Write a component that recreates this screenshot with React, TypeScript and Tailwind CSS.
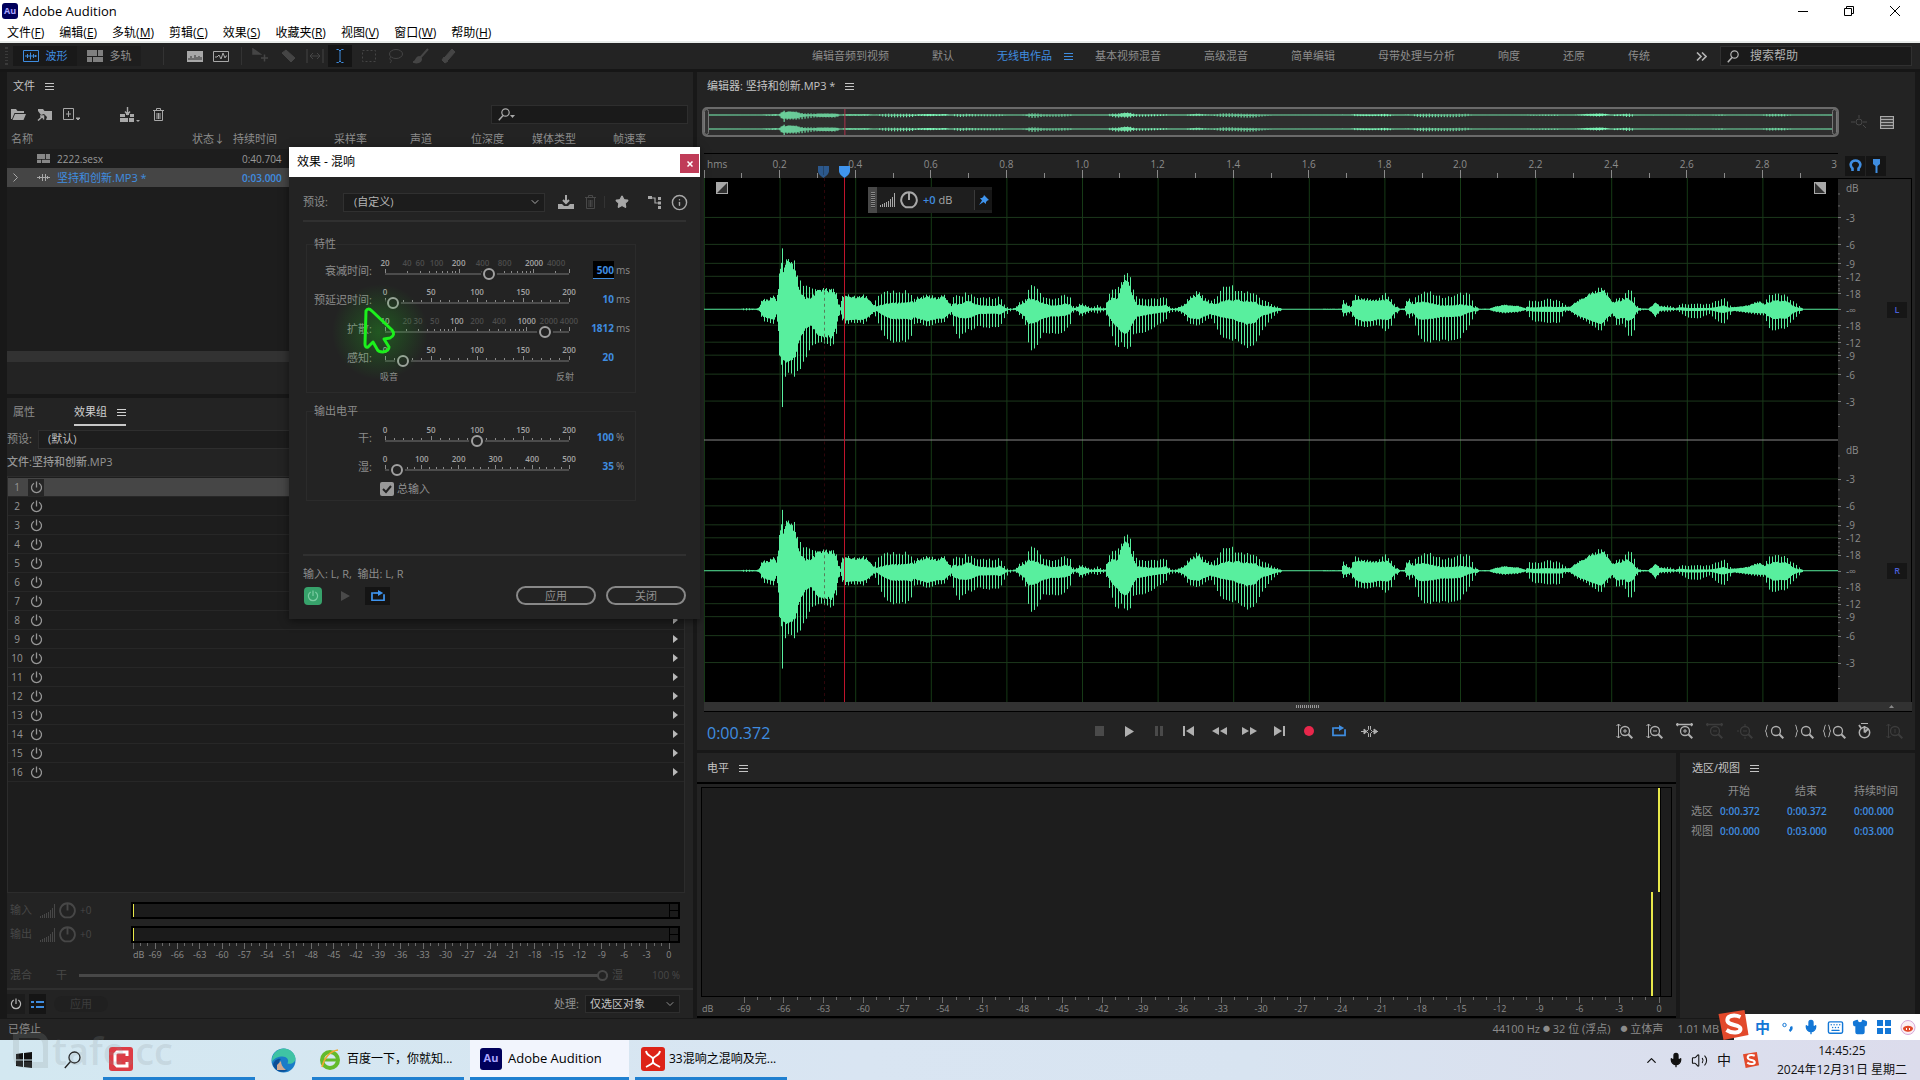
import React from "react";
import { Star, Search, ChevronDown, ChevronUp, Mic, Volume2, Info, Shirt, Keyboard } from "lucide-react";

type Pt = [number, number, number, number];

/* x, peak up, peak down, solid share of the envelope */
const FIRST: Pt[] = [
  [10, 1, 1, 1], [100, 1, 1, 1], [112, 4, 4, 0.2], [140, 2, 2, 1], [148, 5, 4, 1], [152, 20, 15, 0.6], [158, 38, 38, 0.6], [172, 36, 42, 0.7], [188, 46, 46, 0.7],
  [192, 25, 15, 0.8], [197, 60, 70, 0.9], [201, 145, 180, 0.8], [206, 150, 225, 0.8], [212, 150, 225, 0.7], [220, 154, 190, 0.85], [240, 152, 208, 0.75],
  [245, 108, 190, 0.6], [255, 82, 178, 0.45], [268, 72, 145, 0.4], [280, 66, 112, 0.45], [300, 64, 104, 0.8], [325, 68, 114, 0.75], [333, 68, 120, 0.75],
  [344, 58, 78, 0.7], [348, 20, 35, 0.7], [354, 10, 6, 0.6], [358, 40, 32, 0.8], [366, 48, 46, 0.8], [385, 42, 42, 0.8], [400, 40, 42, 0.8], [413, 48, 46, 0.7],
  [425, 34, 30, 0.8], [438, 12, 10, 0.8], [445, 42, 30, 0.2], [460, 50, 72, 0.25], [480, 60, 102, 0.3], [500, 54, 102, 0.3], [520, 60, 100, 0.3], [532, 56, 95, 0.35],
  [540, 36, 48, 0.5], [550, 40, 42, 0.7], [575, 48, 54, 0.7], [600, 38, 42, 0.7], [615, 50, 42, 0.7], [635, 15, 15, 0.6], [642, 54, 72, 0.3], [655, 40, 88, 0.3],
  [675, 54, 64, 0.45], [690, 44, 64, 0.35], [704, 38, 50, 0.3], [720, 38, 58, 0.25], [745, 36, 56, 0.25], [758, 46, 56, 0.3], [768, 18, 30, 0.3], [778, 5, 12, 0.2],
  [788, 2, 2, 0.5], [798, 8, 5, 0.5], [805, 20, 15, 0.6], [820, 30, 38, 0.6], [833, 80, 130, 0.35], [850, 66, 114, 0.35], [865, 45, 76, 0.4], [885, 34, 76, 0.3],
  [905, 36, 76, 0.3], [920, 50, 70, 0.3], [935, 42, 50, 0.3], [942, 12, 12, 0.3], [950, 8, 5, 0.5], [962, 20, 24, 0.6], [975, 12, 14, 0.6], [990, 5, 8, 0.4],
  [1005, 16, 14, 0.3], [1015, 6, 8, 0.4], [1024, 5, 5, 0.5], [1030, 44, 38, 0.5], [1040, 60, 75, 0.5], [1053, 64, 124, 0.45], [1065, 86, 100, 0.7],
  [1076, 136, 130, 0.6], [1088, 108, 118, 0.5], [1095, 70, 80, 0.5], [1105, 40, 78, 0.3], [1125, 36, 74, 0.25], [1145, 34, 58, 0.25], [1165, 36, 42, 0.25],
  [1178, 38, 32, 0.3], [1186, 10, 12, 0.3], [1195, 3, 8, 0.3], [1210, 8, 8, 0.6], [1225, 18, 22, 0.6], [1235, 42, 46, 0.6], [1258, 64, 52, 0.6], [1270, 44, 42, 0.6],
  [1290, 25, 25, 0.6], [1303, 34, 48, 0.4], [1310, 56, 76, 0.3], [1335, 82, 96, 0.3], [1350, 68, 94, 0.35], [1380, 54, 118, 0.4], [1400, 50, 110, 0.4],
  [1420, 32, 68, 0.3], [1440, 20, 34, 0.4], [1460, 8, 12, 0.4], [1472, 1, 1, 1],
];
const SECOND: Pt[] = [
  [104, 2, 2, 1], [110, 34, 26, 0.5], [118, 18, 18, 0.6], [128, 8, 10, 0.6], [134, 40, 32, 0.6], [140, 44, 50, 0.6], [160, 34, 54, 0.7], [180, 34, 54, 0.7],
  [200, 36, 50, 0.6], [215, 54, 68, 0.5], [228, 40, 60, 0.5], [240, 14, 22, 0.4], [252, 2, 2, 1], [264, 3, 3, 0.7], [272, 45, 32, 0.5], [285, 26, 22, 0.5],
  [300, 52, 90, 0.35], [315, 64, 106, 0.3], [335, 50, 98, 0.3], [360, 38, 96, 0.25], [385, 42, 98, 0.25], [405, 52, 88, 0.25], [430, 48, 46, 0.2], [440, 14, 20, 0.3],
  [452, 2, 2, 1], [478, 2, 2, 1], [490, 8, 8, 0.8], [515, 14, 13, 0.8], [550, 11, 10, 0.8], [570, 3, 3, 0.8], [578, 26, 22, 0.2], [590, 26, 38, 0.2], [625, 34, 42, 0.2],
  [655, 28, 42, 0.2], [668, 16, 10, 0.4], [680, 8, 5, 0.7], [700, 26, 24, 0.8], [730, 50, 44, 0.75], [760, 70, 68, 0.7], [775, 56, 40, 0.7], [790, 20, 15, 0.8],
  [800, 34, 50, 0.6], [820, 44, 46, 0.6], [832, 70, 92, 0.4], [845, 40, 66, 0.4], [852, 12, 15, 0.3], [862, 3, 3, 0.6], [880, 2, 2, 1], [890, 12, 12, 0.8],
  [897, 22, 26, 0.9], [910, 12, 8, 0.6], [935, 12, 8, 0.4], [950, 3, 3, 0.6], [960, 18, 10, 0.3], [980, 16, 26, 0.2], [1010, 18, 28, 0.2], [1035, 16, 14, 0.2],
  [1060, 32, 42, 0.25], [1072, 40, 46, 0.25], [1085, 14, 22, 0.3], [1095, 7, 6, 0.8], [1130, 12, 12, 0.8], [1160, 28, 18, 0.7], [1175, 18, 20, 0.6], [1183, 44, 54, 0.4],
  [1195, 50, 68, 0.45], [1210, 48, 60, 0.5], [1230, 46, 60, 0.5], [1245, 26, 34, 0.4], [1262, 12, 15, 0.3], [1272, 1, 1, 1], [1360, 1, 1, 1],
];
const ENV: Pt[] = [
  ...FIRST.map(([x, u, d, c]): Pt => [(x - 10) / 2.529, u / 3, d / 3, c]),
  ...SECOND.map(([x, u, d, c]): Pt => [(x + 1507) / 2.529, u / 3, d / 3, c]),
];

function wavePath(cy: number, gain: number) {
  let path = "";
  let k = 0;
  for (let x = 0; x < 1134; x++) {
    while (k < ENV.length - 2 && ENV[k + 1][0] < x) k++;
    const [x0, u0, d0, c0] = ENV[k];
    const [x1, u1, d1, c1] = ENV[k + 1];
    const t = Math.min(1, Math.max(0, (x - x0) / (x1 - x0)));
    let up = u0 + (u1 - u0) * t;
    let dn = d0 + (d1 - d0) * t;
    const core = c0 + (c1 - c0) * t;
    const noise = Math.abs(Math.sin(x * 12.9898) * 43758.5453) % 1;
    if (x % 3 !== 0) {
      up *= Math.min(1, core * 1.25);
      dn *= core;
    }
    up *= 0.8 + noise * 0.2;
    dn *= 0.92 + noise * 0.08;
    if (x === 78) {
      up = 61;
      dn = 98;
    }
    const a = Math.max(0.5, up * gain);
    const b = Math.max(0.5, dn * gain);
    path += `M${x + 0.5} ${(cy - a).toFixed(1)}V${(cy + b).toFixed(1)}`;
  }
  return path;
}
const WAVE_L = wavePath(131.5, 1);
const WAVE_R = wavePath(393.5, 1);
const MINI_L = wavePath(6, 0.07);
const MINI_R = wavePath(20, 0.07);

const DB: [number, string][] = [
  [-92, "-3"], [-65, "-6"], [-46, "-9"], [-33, "-12"], [-16, "-18"], [0, "-∞"], [16, "-18"], [33, "-12"], [46, "-9"], [65, "-6"], [92, "-3"],
];

const I = ({ children, w = 16, h = 16, vb, className = "" }: { children: React.ReactNode; w?: number; h?: number; vb?: string; className?: string }) => (
  <svg width={w} height={h} viewBox={vb ?? `0 0 ${w} ${h}`} fill="none" stroke="currentColor" className={`shrink-0 ${className}`} aria-hidden="true">
    {children}
  </svg>
);

const MenuLines = ({ className = "" }: { className?: string }) => (
  <I w={9} h={9} className={className}><path d="M0 1.5h9M0 4.5h9M0 7.5h9" /></I>
);
const WaveBox = () => (
  <I h={12}><path d="M.5.5h15v11H.5zM2 6h12M4.5 4v4M7.5 2.5v7M10.5 4v4M12.5 5v2" /></I>
);
const TrackBox = ({ w = 16 }: { w?: number }) => (
  <I w={w} h={w * 0.75} vb="0 0 16 12"><path d="M0 0h10v6H0zM11 0h5v6h-5zM0 7h5v5H0zM6 7h10v5H6z" fill="currentColor" stroke="none" opacity=".85" /></I>
);
const Loop = ({ w = 16 }: { w?: number }) => (
  <I w={w} h={w * 0.8} vb="0 0 16 13"><path d="M4.5 3.5H1v8.5h14V5" strokeWidth="2" /><path d="M4 3.5h6" strokeWidth="2" /><path d="M8 0l6 3.5L8 7z" fill="currentColor" stroke="none" /></I>
);
const Power = ({ w = 13 }: { w?: number }) => (
  <I w={w} h={w} vb="0 0 13 13"><path d="M4 2.2a5 5 0 1 0 5 0M6.500.5v6" strokeWidth="1.3" /></I>
);
const Knob = ({ w = 18 }: { w?: number }) => (
  <I w={w} h={w} vb="0 0 18 18"><path d="M6 16.300A7.800 7.800 0 1 1 12 16.300z" strokeWidth="2" /><path d="M9 2v7" strokeWidth="2" /></I>
);
const Bars = () => (
  <I w={16} h={14}><path d="M1.500 14v-2M3.500 14v-3M5.500 14v-4M7.500 14v-5M9.500 14v-6M11.500 14v-8M13.500 14v-10M15.500 14V0" /></I>
);
const Magnet = () => (
  <I w={13} h={13}><path d="M3.500 12V9.500C0 6 2 1.500 6.500 1.500S13 6 9.500 9.500V12" strokeWidth="2.600" /></I>
);
const Lens = () => (
  <I w={12} h={13}><circle cx="7.500" cy="4.500" r="3.700" strokeWidth="1.200" /><path d="M5 7.500L.8 12.300" strokeWidth="1.500" /></I>
);

const Mag = ({ inner = "" }: { inner?: string }) => (
  <>
    <circle cx="9" cy="8" r="4.500" strokeWidth="1.300" />
    <path d="M12.300 11.300l4 4" strokeWidth="2" />
    <path d={inner || "M9 8"} />
  </>
);

function Tool({ label, children, className = "" }: { label: string; children: React.ReactNode; className?: string }) {
  return (
    <button aria-label={label} className={`flex items-center justify-center ${className}`}>
      {children}
    </button>
  );
}

function AuLogo({ className = "" }: { className?: string }) {
  return <span className={`flex items-center justify-center rounded-[3px] bg-[#00005b] font-bold text-[#a9a4ff] ${className}`}>Au</span>;
}

const MENUS: [string, string][] = [["文件", "F"], ["编辑", "E"], ["多轨", "M"], ["剪辑", "C"], ["效果", "S"], ["收藏夹", "R"], ["视图", "V"], ["窗口", "W"], ["帮助", "H"]];

function TopBars() {
  return (
    <header>
      <div className="flex h-[22px] items-center bg-white pl-[2px] text-black">
        <AuLogo className="h-4 w-4 text-[9px]" />
        <h1 className="ml-[5px] text-[13px] leading-4">Adobe Audition</h1>
        <div className="ml-auto flex">
          <Tool label="最小化" className="w-[46px]"><I w={10} h={10}><path d="M0 5.500h10" /></I></Tool>
          <Tool label="还原" className="w-[46px]"><I w={10} h={10}><path d="M.5 2.500h7v7h-7zM2.500 2.500v-2h7v7h-2" /></I></Tool>
          <Tool label="关闭窗口" className="mr-[2px] w-[46px]"><I w={10} h={10}><path d="M0 0l10 10M10 0L0 10" /></I></Tool>
        </div>
      </div>
      <nav className="flex h-[21px] items-center gap-[15px] border-b-2 border-[#e8ecea] bg-white pt-[2px] pl-[7px] text-[12px] leading-4 text-black">
        {MENUS.map(([t, k]) => (
          <button key={k} className="whitespace-nowrap">{t}(<u>{k}</u>)</button>
        ))}
      </nav>
    </header>
  );
}

const SPACES = ["编辑音频到视频", "默认", "无线电作品", "基本视频混音", "高级混音", "简单编辑", "母带处理与分析", "响度", "还原", "传统"];

function ToolBar() {
  return (
    <div className="flex h-[29px] items-stretch border-b-[3px] border-[#161616] bg-[#232323] pr-2">
      <div className="my-1 ml-[5px] w-[3px] border-y border-[#3a3a3a] bg-[repeating-linear-gradient(#3a3a3a_0_1px,transparent_1px_3px)]" />
      <button className="my-[3px] ml-[5px] flex w-16 items-center justify-center gap-[7px] bg-[#191919] text-[11px] text-[#3f8de0]"><WaveBox />波形</button>
      <button className="my-[3px] flex w-16 items-center justify-center gap-[7px] bg-[#1e1e1e] text-[11px] text-[#909090]"><TrackBox />多轨</button>
      <div className="my-1 ml-[22px] w-px bg-[#333]" />
      <div className="ml-[18px] flex text-[#a8a8a8]">
        <Tool label="频谱" className="w-[26px]"><I h={11}><path d="M0 0h16v11H0z" fill="currentColor" stroke="none" /><path d="M2 9V7M4 9V5M6 9V7M8 9V4M10 9V6M12 9V5M14 9V6" stroke="#333" /></I></Tool>
        <Tool label="音高" className="w-[26px]"><I h={11}><path d="M.5.500h15v10H.5zM2 6h2l2-2 2 4 2-6 2 5 1-2h1" /></I></Tool>
      </div>
      <div className="my-1 ml-[7px] w-px bg-[#333]" />
      <div className="flex text-[#454545]">
        <Tool label="移动" className="ml-1 w-[28px]"><I><path d="M1 1l7 5H1zM9 10h7M12.500 6.500v7" fill="currentColor" strokeWidth="1.500" /></I></Tool>
        <Tool label="切断" className="w-[28px]"><I w={15} h={14}><path d="M1 4l4-3 9 8-4 4z" fill="currentColor" /></I></Tool>
        <Tool label="滑动" className="w-[26px]"><I w={18}><path d="M1 1v14M17 1v14M4 8h10M7 5L4 8l3 3M11 5l3 3-3 3" /></I></Tool>
        <Tool label="时间选择" className="my-[2px] w-[24px] bg-[#141414] text-[#3f8de0]"><I w={8} h={14}><path d="M.5.500h2L4 2 5.500.500h2M4 2v10M.5 13.500h2L4 12l1.500 1.500h2" /></I></Tool>
        <Tool label="框选" className="ml-1 w-[26px]"><I w={14} h={12}><path d="M.5.500h13v11H.5z" strokeDasharray="2 2" /></I></Tool>
        <Tool label="套索" className="w-[26px]"><I><ellipse cx="9" cy="6" rx="6.500" ry="4.500" /><path d="M4 9c-2 1-1 3 0 3s0 2-1 3" /></I></Tool>
        <Tool label="画笔" className="w-[26px]"><I><path d="M15 1L7 10M6 9c-3 0-2 4-5 5 3 1 7 0 7-3z" fill="currentColor" strokeWidth="2" /></I></Tool>
        <Tool label="修复" className="w-[27px]"><I><path d="M5 9l7-8 3 3-7 8zM2 12l2-3 4 4-3 2z" fill="currentColor" /></I></Tool>
      </div>
      <nav className="ml-auto flex items-center gap-[43px] text-[11px] text-[#8c8c8c]">
        {SPACES.map((s, i) => (
          <button key={s} className={i === 2 ? "-mr-[21px] flex items-center gap-3 whitespace-nowrap text-[#3f8de0]" : "whitespace-nowrap"}>
            {s}{i === 2 && <MenuLines />}
          </button>
        ))}
      </nav>
      <button aria-label="更多" className="ml-[46px] text-[#b4b4b4]"><I w={11} h={9}><path d="M1 .5l4 4-4 4M6 .5l4 4-4 4" strokeWidth="1.600" /></I></button>
      <label className="my-[3px] ml-[13px] flex w-[192px] items-center gap-[11px] border border-[#303030] bg-[#1a1a1a] pl-[6px] text-[#b4b4b4]">
        <Lens />
        <input type="text" aria-label="搜索帮助" placeholder="搜索帮助" className="w-full bg-transparent text-[12px] outline-none placeholder:text-[#b0b0b0]" />
      </label>
    </div>
  );
}

function PanelHead({ title, className = "" }: { title: string; className?: string }) {
  return (
    <h2 className={`flex h-7 shrink-0 items-center gap-[10px] text-[11px] text-[#c4c4c4] ${className}`}>
      {title}
      <MenuLines />
    </h2>
  );
}

function FilesPanel() {
  return (
    <section className="flex h-[322px] shrink-0 flex-col bg-[#232323]">
      <PanelHead title="文件" className="pl-[6px]" />
      <div className="flex h-7 items-center pl-1 text-[#a8a8a8]">
        <Tool label="打开"><I w={15} h={12}><path d="M0 1h5l1.500 2H13v2H3.500L1 11H0zM4 6h11l-2.500 6H1.500z" fill="currentColor" stroke="none" /></I></Tool>
        <Tool label="导入" className="ml-[11px]"><I w={16} h={13}><path d="M1 3V1h5l1.500 2H15v9H9l1-3-3-3-3 1z" fill="currentColor" stroke="none" /><path d="M1 12.500L6 8M3 8h3.500v3.500" strokeWidth="1.500" /></I></Tool>
        <Tool label="新建" className="ml-[10px]"><I w={18} h={12}><path d="M.5.500h10v11H.5zM5.500 3v6M3 6h5" /><path d="M13 10h4l-2 2z" fill="currentColor" /></I></Tool>
        <Tool label="插入多轨" className="ml-[39px]"><I w={20} h={15}><path d="M0 7h5v3H0zM10 7h4v3h-4zM0 11h8v4H0zM9 11h5v4H9zM6 5h3v3H6z" fill="currentColor" stroke="none" /><path d="M7.500 0v7M5 4.500L7.500 7.500 10 4.500" strokeWidth="1.400" /><path d="M16 13h4l-2 2z" fill="currentColor" stroke="none" /></I></Tool>
        <Tool label="删除" className="ml-[13px]"><I w={11} h={13}><path d="M0 2.500h11M3.500 2V.500h4V2M1.500 3v9.500h8V3M4 5v6M5.500 5v6M7 5v6" /></I></Tool>
        <label className="mr-[5px] ml-auto flex h-[19px] w-[197px] items-center border border-[#2e2e2e] bg-[#1a1a1a] pl-[6px]">
          <Lens />
          <I w={5} h={3} className="mt-1"><path d="M0 0h5L2.500 3z" fill="currentColor" stroke="none" /></I>
          <input type="text" aria-label="搜索文件" className="w-full bg-transparent text-[11px] outline-none" />
        </label>
      </div>
      <div className="flex-1 bg-[#1d1d1d]">
        <table className="w-full table-fixed text-left text-[11px] leading-4 text-[#8c8c8c]">
          <colgroup>
            <col className="w-[185px]" /><col className="w-[41px]" /><col className="w-[101px]" /><col className="w-[76px]" /><col className="w-[61px]" /><col className="w-[61px]" /><col className="w-[81px]" /><col />
          </colgroup>
          <thead className="bg-[#232323]">
            <tr className="h-[21px]">
              {["名称", "状态↓", "持续时间", "采样率", "声道", "位深度", "媒体类型", "帧速率"].map((h, i) => (
                <th key={h} className={i === 0 ? "pl-1 font-normal" : "whitespace-nowrap font-normal"}>{h}</th>
              ))}
            </tr>
          </thead>
          <tbody>
            <tr className="h-[19px] text-[10px] text-[#9a9a9a]">
              <td><span className="flex items-center gap-[7px] pl-[30px]"><TrackBox w={13} />2222.sesx</span></td>
              <td /><td className="pl-[9px]">0:40.704</td><td colSpan={5} />
            </tr>
            <tr className="h-[19px] bg-[#454545] text-[10px] text-[#3f8de0]">
              <td>
                <span className="flex items-center pl-[6px]">
                  <I w={5} h={9} className="text-[#a8a8a8]"><path d="M.5.500l4 4-4 4" /></I>
                  <I w={13} h={9} className="mr-[7px] ml-[19px] text-[#a8a8a8]"><path d="M0 4.500h13M2.500 3v3M5.500 1v7M8.500 1v7M10.500 3v3" /></I>
                  <span className="whitespace-nowrap text-[11px]">坚持和创新.MP3 *</span>
                </span>
              </td>
              <td /><td className="pl-[9px] font-semibold">0:03.000</td><td colSpan={5} />
            </tr>
          </tbody>
        </table>
      </div>
      <div className="h-[11px] bg-[#323232]" />
      <div className="h-8" />
    </section>
  );
}

function DbLabels({ className = "" }: { className?: string }) {
  const vals = Array.from({ length: 24 }, (_, i) => String(-69 + i * 3));
  return (
    <div className={`flex justify-between text-[9px] leading-[12px] text-[#8c8c8c] ${className}`}>
      {vals.map((v) => (
        <span key={v} className="flex w-0 justify-center">{v}</span>
      ))}
    </div>
  );
}

function MeterTicks({ steps = 72 }: { steps?: number }) {
  return (
    <svg className="block h-[6px] w-full overflow-visible" aria-hidden="true">
      {Array.from({ length: steps + 1 }, (_, i) => (
        <line key={i} x1={`${(i / steps) * 100}%`} x2={`${(i / steps) * 100}%`} y1="0" y2={i % 3 === 0 ? 6 : 3} stroke="#6a6a6a" shapeRendering="crispEdges" />
      ))}
    </svg>
  );
}

function RackMeter({ label }: { label: string }) {
  return (
    <div className="flex h-[17px] items-center pr-[13px] pl-[3px]">
      <div className="flex w-[121px] items-center gap-[7px] text-[11px] text-[#474747]">
        {label}<span className="flex items-center gap-[4px]"><Bars /><Knob w={17} /><span className="text-[10px]">+0</span></span>
      </div>
      <div className="flex h-full flex-1 border-2 border-black bg-[#1b1b1b]">
        <div className="w-px bg-[#e8e84a]" />
        <div className="ml-auto flex w-[9px] flex-col border-l border-black"><div className="h-1/2 border-b border-black" /></div>
      </div>
    </div>
  );
}

function RackPanel() {
  return (
    <section className="flex min-h-0 flex-1 flex-col bg-[#232323]">
      <div className="flex h-[29px] shrink-0 items-center pl-[6px] text-[11px]">
        <button className="w-[61px] text-left text-[#8c8c8c]">属性</button>
        <button className="mt-[2px] flex h-[25px] items-center gap-[10px] border-b-2 border-[#c8c8c8] text-[#d0d0d0]">效果组<MenuLines /></button>
      </div>
      <label className="flex h-6 items-center text-[11px] text-[#8c8c8c]">
        <span className="w-[31px]">预设:</span>
        <select className="h-[19px] flex-1 appearance-none border border-[#2e2e2e] bg-[#1d1d1d] pl-[9px] text-[#c0c0c0]"><option>(默认)</option></select>
      </label>
      <p className="flex h-[25px] items-center pb-[2px] text-[11px] font-medium text-[#959595]">文件:坚持和创新.MP3</p>
      <ol className="mr-2 min-h-0 flex-1 border border-[#2c2c2c] bg-[#1d1d1d] pt-px text-[10px] text-[#969696]">
        {Array.from({ length: 16 }, (_, i) => (
          <li key={i} className={`flex h-[19px] items-center border-b border-[#272727] ${i === 0 ? "bg-[#464646]" : "bg-[#1d1d1d]"}`}>
            <span className="w-[18px] text-center">{i + 1}</span>
            <Tool label={`效果 ${i + 1} 电源`} className={`ml-[2px] h-[17px] w-4 ${i === 0 ? "bg-[#262626]" : ""}`}><Power /></Tool>
            <Tool label={`效果 ${i + 1} 菜单`} className="mr-px ml-auto h-4 w-4 text-[#b8b8b8]"><I w={5} h={8}><path d="M0 0l5 4-5 4z" fill="currentColor" stroke="none" /></I></Tool>
          </li>
        ))}
      </ol>
      <div className="mt-[9px] flex flex-col gap-[7px]">
        <RackMeter label="输入" />
        <RackMeter label="输出" />
      </div>
      <div className="mr-[24px] ml-[126px] flex text-[9px] leading-[12px] text-[#8c8c8c]">
        <div className="flex w-[22px] flex-col"><svg className="block h-[6px] w-full" aria-hidden="true"><path d="M.5 0v6M7.500 0v3M14.500 0v3" stroke="#6a6a6a" /></svg><span>dB</span></div>
        <div className="flex-1"><MeterTicks steps={69} /><DbLabels /></div>
      </div>
      <div className="mt-1 flex h-5 items-center pl-[3px] text-[11px] text-[#484848]">
        <span className="w-[46px]">混合</span><span className="w-[23px]">干</span>
        <input type="range" aria-label="混合" defaultValue={100} className="h-3 w-[529px] appearance-none bg-[linear-gradient(#484848,#484848)] bg-[length:100%_3px] bg-center bg-no-repeat [&::-webkit-slider-thumb]:h-[11px] [&::-webkit-slider-thumb]:w-[11px] [&::-webkit-slider-thumb]:appearance-none [&::-webkit-slider-thumb]:rounded-full [&::-webkit-slider-thumb]:border-2 [&::-webkit-slider-thumb]:border-[#484848] [&::-webkit-slider-thumb]:bg-[#232323]" />
        <span className="ml-1">湿</span><span className="ml-auto pr-[13px] text-[10px]">100 %</span>
      </div>
      <div className="mt-[3px] h-[2px] bg-[#2f2f2f]" />
      <div className="flex h-[28px] items-center text-[11px] text-[#909090]">
        <Tool label="电源" className="h-5 w-[18px] bg-[#1c1c1c] text-[#b8b8b8]"><Power w={12} /></Tool>
        <Tool label="列表" className="ml-[4px] h-5 w-[17px] bg-[#151515] text-[#3f8de0]"><I w={13} h={9}><path d="M0 2h3M5 2h8M0 7h3M5 7h8" strokeWidth="2" /></I></Tool>
        <button className="ml-[8px] h-4 w-[54px] rounded-lg bg-[#202020] text-[#3c3c3c]">应用</button>
        <label className="mr-[13px] ml-auto flex items-center gap-[6px]">处理:
          <span className="flex h-[18px] items-center border border-[#2e2e2e] bg-[#1a1a1a]">
            <select className="w-[78px] appearance-none bg-transparent pl-[4px] text-[#c4c4c4]"><option>仅选区对象</option></select>
            <ChevronDown size={12} className="mr-[3px]" />
          </span>
        </label>
      </div>
    </section>
  );
}

function WaveView() {
  const secs = Array.from({ length: 31 }, (_, i) => i);
  const pin = "flex w-0 justify-center";
  return (
    <div className="flex min-h-0 flex-1 pr-[3px] pl-[7px]">
      <div className="flex min-w-0 flex-1 flex-col">
        <div className="relative h-[25px] overflow-hidden border-t border-black bg-[#232323] text-[10px] leading-[14px] text-[#8c8c8c]">
          <svg className="absolute inset-0 h-full w-full" aria-hidden="true">
            {secs.map((i) => (
              <line key={i} x1={`${i / 0.3}%`} x2={`${i / 0.3}%`} y1={i % 2 ? 19 : 16} y2="25" stroke="#8a8a8a" shapeRendering="crispEdges" />
            ))}
          </svg>
          <div className="flex justify-between pt-[3px]">
            <span className="w-0"><span className="pl-[3px]">hms</span></span>
            {secs.slice(1, 15).map((i) => (
              <span key={i} className={pin}>{(i * 0.2).toFixed(1)}</span>
            ))}
            <span className="flex w-0 justify-end"><span className="pr-px">3</span></span>
          </div>
          <svg className="absolute top-[12px] left-[12.400%] -ml-[6px] h-3 w-[11px]" viewBox="0 0 11 12" aria-hidden="true"><path d="M0 0h11v5c0 3-3 5-5.500 7C3 10 0 8 0 5z" fill="#3f94ee" /></svg>
          <svg className="absolute top-[12px] left-[10.600%] -ml-[6px] h-3 w-[11px]" viewBox="0 0 11 12" aria-hidden="true"><path d="M0 0h11v5c0 3-3 5-5.500 7C3 10 0 8 0 5z" fill="#2c588c" /><path d="M5.500 0v9" stroke="#234468" /></svg>
        </div>
        <div className="relative min-h-0 flex-1 bg-black">
          <svg className="absolute inset-0 h-full w-full" viewBox="0 0 1134 525" preserveAspectRatio="none" role="img" aria-label="波形">
            <g stroke="#163a16" shapeRendering="crispEdges">
              {secs.filter((i) => i % 2 === 0 && i < 30).map((i) => (
                <line key={i} x1={i * 37.8 + 0.5} x2={i * 37.8 + 0.5} y1="0" y2="525" />
              ))}
            </g>
            <g stroke="#1c381c" shapeRendering="crispEdges">
              {[131.5, 393.5].map((c) => DB.filter(([d]) => d !== 0).map(([d]) => <line key={`${c}${d}`} x1="0" x2="1134" y1={c + d} y2={c + d} />))}
            </g>
            <path d="M0 262.500h1134" stroke="#8a8a8a" />
            <path d={WAVE_L} stroke="#58f09f" />
            <path d={WAVE_R} stroke="#58f09f" />
            <path d="M120.500 0v525" stroke="#5a0a14" strokeDasharray="3 3" opacity=".5" />
            <path d="M140.500 0v525" stroke="#c0142c" shapeRendering="crispEdges" />
          </svg>
          <svg className="absolute top-1 left-3 h-3 w-3" viewBox="0 0 12 12" aria-hidden="true"><path d="M0 0h12v12H0z" fill="#a8a8a8" /><path d="M11 1v10H1z" fill="#303030" /></svg>
          <svg className="absolute top-1 right-3 h-3 w-3" viewBox="0 0 12 12" aria-hidden="true"><path d="M0 0h12v12H0z" fill="#a8a8a8" /><path d="M1 1v10h10z" fill="#303030" /></svg>
          <div className="absolute top-[9px] left-[164px] flex h-[26px] w-[124px] items-center bg-[#1e1e1e] text-[#a8a8a8]">
            <div className="mr-[2px] flex h-full w-[9px] items-center justify-center bg-[#484848]"><div className="h-4 w-1 bg-[repeating-linear-gradient(#888_0_1px,#333_1px_2px)]" /></div>
            <Bars />
            <span className="mx-[5px]"><Knob /></span>
            <span className="text-[11px]"><span className="font-semibold text-[#3f8de0]">+0</span> dB</span>
            <Tool label="固定" className="ml-auto h-5 w-[18px] border-l border-[#3a3a3a] bg-[#161616] text-[#3f94ee]"><I w={10} h={10}><path d="M5 0l5 5-1.500.5L7 7v2L4.500 7 0 10l3-4.500L1 3h2l1.500-1.500z" fill="currentColor" stroke="none" /></I></Tool>
          </div>
        </div>
      </div>
      <div className="flex w-[74px] flex-col text-[10px] leading-3 text-[#8c8c8c]">
        <div className="flex h-[25px] items-center gap-px pl-[7px] text-[#3f8de0]">
          <Tool label="对齐" className="h-5 w-[20px] bg-[#151515]"><Magnet /></Tool>
          <Tool label="标记" className="h-5 w-[20px] bg-[#151515]"><I w={9} h={14}><path d="M1 0h7v5L5.500 7v7h-2V7L1 5z" fill="currentColor" stroke="none" /></I></Tool>
        </div>
        <div className="flex min-h-0 flex-1 flex-col border-t border-r border-black">
          {["L", "R"].map((ch) => (
            <div key={ch} className="relative flex-1">
              <span className="absolute top-[3px] left-2">dB</span>
              {DB.map(([d, t]) => (
                <span key={d} className="absolute left-0 flex -translate-y-1/2 items-center gap-[5px]" style={{ top: `${50 + (d / 262) * 100}%` }}>
                  <span className="h-px w-[3px] bg-[#777]" />{t}
                </span>
              ))}
              <svg className="absolute top-0 left-0 h-full w-[2px]" aria-hidden="true" viewBox="0 0 2 262" preserveAspectRatio="none">
                {[15, 27, 49, 58, 75, 80, 91, 102, 106, 110, 112, 149, 153, 157, 160, 170, 174, 182, 190, 206, 215, 236, 248].map((y) => <path key={y} d={`M0 ${y}h2`} stroke="#666" />)}
              </svg>
              <button className="absolute top-1/2 right-1 flex h-4 w-5 -translate-y-1/2 items-center justify-center bg-[#161616] text-[9px] font-semibold text-[#4a5fd8]">{ch}</button>
            </div>
          ))}
        </div>
      </div>
    </div>
  );
}

const V = <path d="M2.500 1v14M.5 3l2-2 2 2M.5 13l2 2 2-2" />;
const H = <path d="M0 1.500h17M2 0L.5 1.500 2 3M15 0l1.500 1.500L15 3" strokeWidth="1.300" />;
const DIM = "text-[#3c3c3c]";

function Transport() {
  const off = "text-[#4a4a4a]";
  const b = "w-[30px]";
  const z = "w-[30px]";
  return (
    <div className="flex h-[38px] shrink-0 items-center pr-[6px] pl-[10px] text-[#b0b0b0]">
      <output className="w-[377px] pt-[3px] text-[16px] leading-5 text-[#3f8de0]">0:00.372</output>
      <div className="flex h-5 items-center">
        <Tool label="停止" className={`${b} ${off}`}><I w={9} h={10}><path d="M0 0h9v10H0z" fill="currentColor" stroke="none" /></I></Tool>
        <Tool label="播放" className={b}><I w={9} h={11}><path d="M0 0l9 5.500L0 11z" fill="currentColor" stroke="none" /></I></Tool>
        <Tool label="暂停" className={`${b} ${off}`}><I w={8} h={10}><path d="M0 0h3v10H0zM5 0h3v10H5z" fill="currentColor" stroke="none" /></I></Tool>
        <Tool label="上一个" className={b}><I w={12} h={10}><path d="M1 0v10" strokeWidth="2" /><path d="M11 0L3 5l8 5z" fill="currentColor" stroke="none" /></I></Tool>
        <Tool label="快退" className={b}><I w={15} h={8}><path d="M7 0L0 4l7 4zM15 0L8 4l7 4z" fill="currentColor" stroke="none" /></I></Tool>
        <Tool label="快进" className={b}><I w={15} h={8}><path d="M0 0l7 4-7 4zM8 0l7 4-7 4z" fill="currentColor" stroke="none" /></I></Tool>
        <Tool label="下一个" className={b}><I w={12} h={10}><path d="M11 0v10" strokeWidth="2" /><path d="M1 0l8 5-8 5z" fill="currentColor" stroke="none" /></I></Tool>
        <Tool label="录制" className={b}><span className="h-[10px] w-[10px] rounded-full bg-[#e8274b]" /></Tool>
        <Tool label="循环" className={`${b} text-[#3f8de0]`}><Loop w={14} /></Tool>
        <Tool label="跳过选区" className={b}><I w={17} h={11}><path d="M0 5.500h5M12 5.500h5M7.500 0v3.500l-2 2 2 2V11M9.500 0v3.500l2 2-2 2V11" /><path d="M3 3l3 2.500L3 8zM13 3l3.500 2.500L13 8z" fill="currentColor" /></I></Tool>
      </div>
      <div className="ml-auto flex h-5 items-center">
        <Tool label="垂直放大" className={z}><I w={17}>{V}<Mag inner="M9 6v4M7 8h4" /></I></Tool>
        <Tool label="垂直缩小" className={z}><I w={17}>{V}<Mag inner="M7 8h4" /></I></Tool>
        <Tool label="水平放大" className={z}><I w={17} h={17}>{H}<Mag inner="M9 6v4M7 8h4" /></I></Tool>
        <Tool label="水平缩小" className={`${z} ${DIM}`}><I w={17} h={17}>{H}<Mag inner="M7 8h4" /></I></Tool>
        <Tool label="全部缩小" className={`${z} ${DIM}`}><I w={17} h={17}><Mag inner="M9 1v2M1 8h2M7 8h4M9 14v2" /></I></Tool>
        <Tool label="缩放入点" className={z}><I w={20} vb="-3 0 20 16"><Mag /><path d="M1 2C-1 2 0 8-2 8c2 0 1 6 3 6" /></I></Tool>
        <Tool label="缩放出点" className={z}><I w={20} vb="-3 0 20 16"><Mag /><path d="M-2 2C0 2-1 8 1 8c-2 0-1 6-3 6" /></I></Tool>
        <Tool label="缩放选区" className={z}><I w={24} vb="-7 0 24 16"><Mag /><path d="M-3 2c-2 0-1 6-3 6 2 0 1 6 3 6M-1 2c2 0 1 6 3 6-2 0-1 6-3 6" /></I></Tool>
        <Tool label="时间缩放" className={z}><I w={15}><circle cx="7.500" cy="9.500" r="5.200" strokeWidth="1.500" /><path d="M7.500 9.500V3M4 0h7M2 2l2 3M7.500 9.500L11 6" strokeWidth="1.800" /></I></Tool>
        <Tool label="缩放重置" className={`${z} ${DIM}`}><I w={17}>{V}<Mag inner="M9 6v4" /></I></Tool>
      </div>
    </div>
  );
}

function EditorPanel() {
  return (
    <section className="flex min-h-0 flex-1 flex-col bg-[#232323]">
      <PanelHead title="编辑器: 坚持和创新.MP3 *" className="pl-[10px]" />
      <div className="flex h-[53px] shrink-0 items-start pt-[7px] pl-[5px]">
        <div className="relative h-[30px] min-w-0 flex-1 rounded-[5px] border-2 border-[#6a6a6a] bg-[#2e2e2e] px-[2px]">
          <svg className="block h-[26px] w-full" viewBox="0 0 1134 26" preserveAspectRatio="none" aria-hidden="true">
            <path d={MINI_L} stroke="#7dfcbb" />
            <path d={MINI_R} stroke="#7dfcbb" />
            <path d="M139.500 0v26" stroke="#b0304a" />
          </svg>
          <div className="absolute inset-y-0 left-0 w-[5px] rounded-sm border border-[#777] bg-[#333]" />
          <div className="absolute inset-y-0 right-0 w-[5px] rounded-sm border border-[#777] bg-[#333]" />
        </div>
        <div className="flex h-[30px] w-[76px] items-center gap-[13px] pl-[12px]">
          <Tool label="缩放导航" className="text-[#484848]"><I w={16} h={14}><circle cx="8" cy="7" r="3" /><path d="M0 7h4M12 10l3 3M8 0v3M12 7h4" /></I></Tool>
          <Tool label="显示列表" className="text-[#a8a8a8]"><I w={14} h={13}><path d="M.5.500h13v12H.5zM1 3.500h12M1 6.500h12M1 9.500h12" strokeWidth="1.300" /></I></Tool>
        </div>
      </div>
      <WaveView />
      <div className="mr-[3px] ml-[7px] flex h-[10px] shrink-0 items-center border-b border-black bg-[#323232] pr-[18px] pl-[23px] text-[#888]">
        <div className="mx-auto h-[3px] w-6 bg-[repeating-linear-gradient(90deg,#999_0_1px,transparent_1px_2px)]" />
        <I w={5} h={3}><path d="M0 3h5L2.500 0z" fill="currentColor" stroke="none" /></I>
      </div>
      <Transport />
    </section>
  );
}

function LevelPanel() {
  return (
    <section className="flex min-w-0 flex-1 flex-col bg-[#232323]">
      <PanelHead title="电平" className="h-[31px] border-b-2 border-black pt-[2px] pl-[10px]" />
      <div className="mx-1 mt-[3px] flex min-h-0 flex-1 border border-black bg-[#1d1d1d] pr-[10px]">
        <div className="ml-auto grid w-[10px] grid-rows-2 border-r border-black">
          <div className="border-r-2 border-[#e8e84a]" />
          <div className="border-l-2 border-[#e8e84a]" />
        </div>
      </div>
      <div className="mr-[17px] ml-[5px] flex text-[9px] leading-[12px] text-[#8c8c8c]">
        <div className="w-[42px] pt-[6px]">dB</div>
        <div className="flex-1"><MeterTicks steps={69} /><DbLabels /></div>
      </div>
      <div className="mt-px border-b-2 border-black" />
    </section>
  );
}

function SelectionPanel() {
  return (
    <section className="w-[235px] bg-[#232323]">
      <PanelHead title="选区/视图" className="pt-[2px] pl-3" />
      <table className="ml-[11px] w-[213px] table-fixed text-left text-[11px] leading-4 text-[#8c8c8c]">
        <colgroup><col className="w-[29px]" /><col className="w-[67px]" /><col className="w-[67px]" /><col /></colgroup>
        <thead>
          <tr className="h-5">
            <th aria-label="范围" />
            {["开始", "结束", "持续时间"].map((h, i) => (
              <th key={h} className={i === 2 ? "font-normal whitespace-nowrap" : "pr-[29px] text-center font-normal whitespace-nowrap"}>{h}</th>
            ))}
          </tr>
        </thead>
        <tbody>
          {[["选区", "0:00.372", "0:00.372", "0:00.000"], ["视图", "0:00.000", "0:03.000", "0:03.000"]].map(([h, ...v]) => (
            <tr key={h} className="h-5">
              <th className="pb-px font-normal">{h}</th>
              {v.map((t, i) => <td key={i} className="pb-px text-[10px] font-semibold text-[#3f8de0]">{t}</td>)}
            </tr>
          ))}
        </tbody>
      </table>
    </section>
  );
}

type Label = [number, string, boolean?];
const LIN: Label[] = [[0, "0"], [25, "50"], [50, "100"], [75, "150"], [100, "200"]];
const linTicks = (n: number, m: number): [number, boolean][] => Array.from({ length: n + 1 }, (_, i) => [(i / n) * 100, i % m === 0]);
const logTicks = (min: number, max: number): [number, boolean][] => {
  const out: [number, boolean][] = [];
  for (let d = min; d <= max; d *= 10) for (let k = 1; k < 10; k++) if (d * k <= max) out.push([(Math.log(d * k / min) / Math.log(max / min)) * 100, k === 1]);
  out.push([100, true]);
  return out;
};

function SliderRow({ name, labels, ticks, pos, value, unit, active }: { name: string; labels: Label[]; ticks: [number, boolean][]; pos: number; value: string; unit?: string; active?: boolean }) {
  return (
    <div className="flex h-[29px] text-[11px] leading-[14px] text-[#8c8c8c]">
      <label htmlFor={name} className="w-[65px] pt-[7px] text-right whitespace-nowrap">{name}:</label>
      <div className="relative ml-[13px] w-[184px]">
        {labels.map(([p, t, dim]) => (
          <span key={t} className={`absolute top-0 -translate-x-1/2 text-[8px] leading-[12px] font-semibold ${dim ? "text-[#4c4c4c]" : "text-[#a4a4a4]"}`} style={{ left: `${p}%` }}>{t}</span>
        ))}
        <svg className="absolute top-[11px] left-0 h-[8px] w-full overflow-visible" aria-hidden="true">
          {ticks.map(([p, m], i) => <line key={i} x1={`${p}%`} x2={`${p}%`} y1={m ? 1 : 3} y2="5" stroke="#8a8a8a" shapeRendering="crispEdges" />)}
          <rect y="5" width="100%" height="2" fill="#4c4c4c" />
        </svg>
        <input id={name} type="range" min={0} max={100} step={0.1} defaultValue={pos} className="absolute top-[11px] -left-[6px] h-3 w-[196px] appearance-none bg-transparent [&::-webkit-slider-thumb]:h-3 [&::-webkit-slider-thumb]:w-3 [&::-webkit-slider-thumb]:appearance-none [&::-webkit-slider-thumb]:rounded-full [&::-webkit-slider-thumb]:border-2 [&::-webkit-slider-thumb]:border-[#a0a0a0] [&::-webkit-slider-thumb]:bg-[#232323] [&::-webkit-slider-thumb]:shadow-[0_0_0_2px_#232323]" />
      </div>
      <div className="ml-[10px] flex w-[55px] items-start pt-[4px]">
        <input aria-label={`${name}数值`} defaultValue={value} className={`ml-auto h-[18px] text-right text-[10px] font-bold text-[#3f8de0] outline-none ${active ? "w-[21px] border-b border-[#3f8de0] bg-black" : "w-[30px] bg-transparent"}`} />
        <span className="ml-[2px] w-[18px] pt-[2px] text-[10px]">{unit}</span>
      </div>
    </div>
  );
}

function ReverbDialog() {
  const box = "ml-[3px] w-[330px] border border-[#2b2b2b] pb-[2px]";
  return (
    <div role="dialog" aria-label="效果 - 混响" className="absolute top-[147px] left-[289px] w-[411px] bg-[#232323] shadow-[0_2px_8px_rgba(0,0,0,.5)]">
      <div className="flex h-[30px] items-center bg-white pl-2 text-[12px] text-black">
        效果 - 混响
        <button aria-label="关闭对话框" className="mt-[3px] mr-px ml-auto flex h-[19px] w-[19px] items-center justify-center bg-[#c03c58] text-white"><I w={6} h={6}><path d="M.5.500l5 5M5.500.500l-5 5" strokeWidth="1.500" /></I></button>
      </div>
      <div className="px-[14px] pt-[14px] pb-[14px]">
        <div className="flex h-[22px] items-center text-[#a8a8a8]">
          <label htmlFor="preset" className="w-[40px] text-[11px] text-[#8c8c8c]">预设:</label>
          <span className="flex h-[19px] w-[202px] items-center border border-[#303030] bg-[#1c1c1c]">
            <select id="preset" className="flex-1 appearance-none bg-transparent pl-[10px] text-[11px] text-[#b4b4b4]"><option>(自定义)</option></select>
            <ChevronDown size={12} className="mr-[3px]" />
          </span>
          <Tool label="保存预设" className="ml-[12px] w-[18px]"><I w={16} h={14}><path d="M0 9h4l2 2h4l2-2h4v5H0z" fill="currentColor" stroke="none" /><path d="M8 0v8M5 5l3 3 3-3" strokeWidth="2" /></I></Tool>
          <Tool label="删除预设" className="ml-[8px] w-[14px] text-[#484848]"><I w={11} h={14}><path d="M0 2.500h11M3.500 2V.500h4V2M1.500 3v10.500h8V3M4 5v7M5.500 5v7M7 5v7" /></I></Tool>
          <span className="ml-[7px] h-3 w-px bg-[#333]" />
          <Tool label="收藏" className="ml-[10px] w-[14px]"><Star size={14} className="fill-current" /></Tool>
          <Tool label="声道映射" className="ml-auto w-4"><I w={14} h={13}><path d="M0 2h7v5h3" strokeWidth="1.200" /><path d="M0 0h4v3H0zM10 1h3v3h-3zM10 5.500h3v3h-3zM10 10h3v3h-3z" fill="currentColor" stroke="none" /></I></Tool>
          <Tool label="信息" className="-mr-[2px] ml-[7px] w-[18px]"><Info size={17} /></Tool>
        </div>
        <div className="mt-[7px] h-[2px] bg-[#303030]" />
        <fieldset className={`mt-[14px] ${box}`}>
          <legend className="ml-[7px] text-[11px] leading-[16px] text-[#8c8c8c]">特性</legend>
          <div className="pt-[5px]">
            <SliderRow name="衰减时间" labels={[[0, "20"], [12, "40", true], [19, "60", true], [28, "100", true], [40, "200"], [53, "400", true], [65, "800", true], [81, "2000"], [93, "4000", true]]} ticks={logTicks(20, 6000)} pos={56.3} value="500" unit="ms" active />
            <SliderRow name="预延迟时间" labels={LIN} ticks={linTicks(20, 5)} pos={4.5} value="10" unit="ms" />
            <SliderRow name="扩散" labels={[[0, "10"], [12, "20", true], [18, "30", true], [27, "50", true], [39, "100"], [50, "200", true], [62, "400", true], [77, "1000"], [89, "2000", true], [100, "4000", true]]} ticks={logTicks(10, 4000)} pos={87} value="1812" unit="ms" />
            <SliderRow name="感知" labels={LIN} ticks={linTicks(20, 5)} pos={10} value="20" />
          </div>
          <div className="-mt-[3px] flex justify-between pr-[61px] pb-[6px] pl-[73px] text-[9px] leading-[14px] text-[#8c8c8c]"><span>吸音</span><span>反射</span></div>
        </fieldset>
        <fieldset className={`mt-[10px] ${box}`}>
          <legend className="ml-[7px] text-[11px] leading-[16px] text-[#8c8c8c]">输出电平</legend>
          <div className="pt-[5px]">
            <SliderRow name="干" labels={LIN} ticks={linTicks(20, 5)} pos={50} value="100" unit="%" />
            <SliderRow name="湿" labels={[[0, "0"], [20, "100"], [40, "200"], [60, "300"], [80, "400"], [100, "500"]]} ticks={linTicks(25, 5)} pos={6.7} value="35" unit="%" />
          </div>
          <label className="-mt-[2px] ml-[73px] flex h-[18px] items-center gap-[3px] text-[11px] text-[#909090]">
            <span className="grid h-[14px] w-[14px]">
              <input type="checkbox" defaultChecked className="col-start-1 row-start-1 h-[14px] w-[14px] appearance-none rounded-[2px] bg-[#999]" />
              <I w={14} h={14} className="pointer-events-none col-start-1 row-start-1 text-[#222]"><path d="M3 7l3 3 5-6" strokeWidth="2" /></I>
            </span>
            总输入
          </label>
        </fieldset>
        <div className="mt-[53px] h-[2px] bg-[#303030]" />
        <p className="mt-[10px] text-[11px] leading-4 text-[#8c8c8c]">输入: L, R,&nbsp; 输出: L, R</p>
        <div className="mt-1 flex h-[19px] items-center">
          <Tool label="效果开关" className="ml-px h-[18px] w-[18px] rounded-sm bg-[#37a26b] text-[#7ccca2]"><Power w={12} /></Tool>
          <Tool label="预览" className="ml-[13px] w-5 text-[#4a4a4a]"><I w={9} h={10}><path d="M0 0l9 5-9 5z" fill="currentColor" stroke="none" /></I></Tool>
          <Tool label="循环播放" className="ml-[10px] h-[18px] w-[25px] bg-[#141414] text-[#3f94ee]"><Loop w={14} /></Tool>
          <button className="mr-[10px] ml-auto h-[19px] w-20 rounded-full border-2 border-[#888] text-[11px] leading-[14px] text-[#909090]">应用</button>
          <button className="h-[19px] w-20 rounded-full border-2 border-[#888] text-[11px] leading-[14px] text-[#909090]">关闭</button>
        </div>
      </div>
    </div>
  );
}

function Sogou({ className = "" }: { className?: string }) {
  return (
    <svg viewBox="0 0 30 30" className={className} aria-hidden="true">
      <path d="M0 4L26 0l4 25L5 30z" fill="#e2492b" />
      <path d="M22 7C15 4 8 6 9 11c1 5 13 3 13 8 0 4-8 5-14 1" fill="none" stroke="#fff" strokeWidth="4" />
    </svg>
  );
}

function ImeBar() {
  return (
    <div className="absolute right-0 bottom-10 flex h-[26px] items-center bg-white pr-1 text-[#1377d6]">
      <Sogou className="-mt-1 -ml-4 h-[30px] w-[31px]" />
      <span className="ml-[6px] w-[16px] text-[15px] leading-5 font-bold">中</span>
      <I w={11} h={10} className="ml-[11px]"><circle cx="2.500" cy="3" r="1.700" /><path d="M9 4.500c1 2 0 3.500-1.500 4.500" strokeWidth="2.500" /></I>
      <Mic size={16} className="ml-[10px] fill-current" />
      <Keyboard size={17} className="ml-[8px]" />
      <Shirt size={16} className="ml-[8px] fill-current" />
      <I w={14} h={14} className="ml-[9px]"><path d="M0 0h6v6H0zM8 0h6v6H8zM0 8h6v6H0zM8 8h6v6H8z" fill="currentColor" stroke="none" /></I>
      <I w={16} h={18} className="ml-[9px] text-[#d8a8d8]"><circle cx="8" cy="9.500" r="7" fill="#fbeef4" /><path d="M3 10c2-3 8-3 10 0 0 5-10 5-10 0z" fill="#e2492b" stroke="none" /><path d="M6 11h1M9 11h1" stroke="#fff" strokeWidth="2" /></I>
    </div>
  );
}

function TaskBar() {
  const task = "flex h-10 items-center gap-[7px] border-b-[3px] border-[#2080d0] pl-2 text-[12px] text-black whitespace-nowrap";
  return (
    <footer className="flex h-10 shrink-0 items-center bg-[linear-gradient(90deg,#d3e8f1,#d9e5f2_45%,#d8e4f1_65%,#dcdcec)]">
      <Tool label="开始" className="ml-[14px] w-5"><I><path d="M0 2l7-1v6.500H0zM8 1l8-1v7.500H8zM0 8.500h7V15l-7-1zM8 8.500h8V16l-8-1z" fill="#111" stroke="none" /></I></Tool>
      <Tool label="搜索" className="ml-[28px] w-5 text-[#222]"><I w={17} h={18}><circle cx="10.500" cy="6.500" r="5.500" strokeWidth="1.300" /><path d="M6.500 10.500L.8 17" strokeWidth="1.300" /></I></Tool>
      <button aria-label="Camtasia" className="ml-[21px] flex h-10 w-[152px] items-center border-b-[3px] border-[#2080d0] pl-[6px]">
        <I w={24} h={24}><rect width="24" height="24" rx="3" fill="#dd3c45" stroke="none" /><path d="M18 9V5H8L6 7v10l2 2h10v-4" stroke="#fff" strokeWidth="3" /></I>
      </button>
      <button aria-label="Edge" className="ml-[16px]">
        <I w={25} h={25}><circle cx="12.500" cy="12.500" r="12" fill="#1a7cc8" stroke="none" /><path d="M1 11C2 4 8 .5 13 .500s11 4 11.500 10c0 4-4 6-8 5 2-4-1-7-5-7S3 10 1 14z" fill="#3fc3a4" stroke="none" /><path d="M8 14c0 5 4 8 9 8-6 4-13 1-15-5 1-5 5-7 8-6-1 1-2 2-2 3z" fill="#0d4f96" stroke="none" /><path d="M10 13c0 3 1 6 5 9H6v-5z" fill="#d0a890" stroke="none" /></I>
      </button>
      <button className={`ml-[16px] w-[152px] ${task}`}>
        <I w={20} h={22}><circle cx="10" cy="12" r="8" stroke="#63bb2c" strokeWidth="4" /><path d="M4 12h13" stroke="#63bb2c" strokeWidth="3" /><path d="M2 19C4 10 10 3 18 2" stroke="#f0a830" strokeWidth="1.500" /></I>
        百度一下，你就知...
      </button>
      <button className={`ml-[6px] w-[159px] bg-[#f2f5fd] ${task}`}><AuLogo className="ml-[2px] h-[22px] w-[22px] text-[11px]" /><span className="-ml-px text-[13px]">Adobe Audition</span></button>
      <button className={`ml-[6px] w-[152px] ${task}`}>
        <I w={24} h={24} className="-ml-[2px]"><rect width="24" height="24" rx="3" fill="#dd2318" stroke="none" /><path d="M5 4c1 6 6 4 7 8s-1 5-7 8M19 4c-1 6-6 4-7 8s1 5 7 8" stroke="#fff" strokeWidth="1.800" /></I>
        <span className="-ml-[3px]">33混响之混响及完...</span>
      </button>
      <div className="ml-auto flex items-center text-[#111]">
        <ChevronUp size={15} />
        <Mic size={16} className="ml-[9px] fill-current" />
        <Volume2 size={17} strokeWidth={1.500} className="ml-[7px]" />
        <span className="ml-[9px] text-[14px] leading-5">中</span>
        <Sogou className="ml-[12px] h-4 w-4" />
        <time className="mr-[12px] ml-[17px] flex w-[132px] flex-col text-center text-[12px] leading-[19px] whitespace-nowrap"><span>14:45:25</span><span>2024年12月31日 星期二</span></time>
      </div>
    </footer>
  );
}

export default function App() {
  return (
    <div className="relative flex h-screen min-h-[760px] w-full flex-col overflow-hidden bg-[#181818] font-['Open_Sans','Noto_Sans_CJK_SC',sans-serif] [&_button]:cursor-default">
      <TopBars />
      <ToolBar />
      <main className="flex min-h-0 flex-1 gap-1 pr-[5px] pl-[7px]">
        <div className="flex w-[686px] shrink-0 flex-col gap-1">
          <FilesPanel />
          <RackPanel />
        </div>
        <div className="flex min-w-0 flex-1 flex-col gap-[3px]">
          <EditorPanel />
          <div className="flex h-[265px] shrink-0 gap-1">
            <LevelPanel />
            <SelectionPanel />
          </div>
        </div>
      </main>
      <div className="mt-px flex h-[21px] shrink-0 items-center bg-[#232323] pl-2 text-[11px] text-[#8c8c8c]">
        <span>已停止</span>
        <span className="mr-[201px] ml-auto flex items-center whitespace-pre"><span>44100 Hz </span><span className="text-[7px]">●</span><span> 32 位 (浮点)</span><span className="ml-[10px] text-[7px]">●</span><span> 立体声</span><span className="ml-[14px]">1.01 MB</span></span>
      </div>
      <TaskBar />
      <ReverbDialog />
      <ImeBar />
      <svg className="pointer-events-none absolute top-[280px] left-[330px] h-[100px] w-[100px]" viewBox="0 0 100 100" aria-hidden="true">
        <defs><radialGradient id="glow"><stop offset="0" stopColor="#1ee01e" stopOpacity=".28" /><stop offset="1" stopColor="#1ee01e" stopOpacity="0" /></radialGradient></defs>
        <circle cx="50" cy="52" r="48" fill="url(#glow)" />
        <path d="M36 31q2-4 6 0l20 19q4 5-2 8l-6 1 5 8q0 4-6 5-5 0-6-3l-4-7-5 5q-3 1-3-3z" fill="none" stroke="#1cf01c" strokeWidth="3" strokeLinejoin="round" />
      </svg>
      <div className="pointer-events-none absolute bottom-[10px] left-[12px] flex items-center gap-1 text-[38px] leading-[40px] font-semibold text-[#8c9498]/20">
        <I w={36} h={38}><path d="M4 4h20q10 0 10 12v18H14Q4 34 4 24z" strokeWidth="6" /></I>
        tafe.cc
      </div>
    </div>
  );
}
